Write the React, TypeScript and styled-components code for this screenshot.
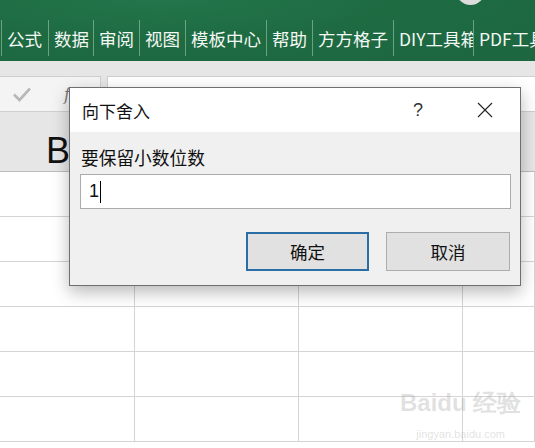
import React from "react";
import styled, { createGlobalStyle } from "styled-components";

const Global = createGlobalStyle`
  html, body { margin: 0; padding: 0; }
  body { font-family: "Noto Sans CJK SC", "Noto Sans", sans-serif; background: #fff; }
`;

const Page = styled.div`
  position: relative;
  width: 535px;
  height: 448px;
  overflow: hidden;
  background: #e6e6e6;
  display: flex;
  flex-direction: column;
`;

const Ribbon = styled.div`
  position: relative;
  height: 61px;
  flex: none;
  background: radial-gradient(ellipse at 30% 0%, #23754a 0%, #1e6b42 45%, #1c6640 100%);
  display: flex;
  align-items: flex-end;
  padding-bottom: 5px;
  box-sizing: border-box;
`;

const Avatar = styled.div`
  position: absolute;
  left: 456px;
  top: -24px;
  width: 29px;
  height: 29px;
  border-radius: 50%;
  background: #dcdcdc;
`;

const Tabs = styled.div`
  display: flex;
  height: 36px;
  margin-left: 1px;
`;

const Tab = styled.div<{ $w?: number }>`
  flex: none;
  ${(p) => (p.$w ? `width: ${p.$w}px;` : "")}
  box-sizing: border-box;
  padding: 0 0 0 5px;
  border-left: 1px solid rgba(200, 230, 210, 0.45);
  display: flex;
  align-items: center;
  color: #f4f8f5;
  font-size: 17.5px;
  white-space: nowrap;
  overflow: hidden;
`;

const FormulaRow = styled.div`
  display: flex;
  gap: 6px;
  margin-top: 15px;
  height: 36px;
  flex: none;
`;

const NameArea = styled.div`
  width: 101px;
  box-sizing: border-box;
  background: #f4f4f4;
  border: 1px solid #cfcfcf;
  border-left: none;
  display: flex;
  align-items: center;
  padding-left: 12px;
  gap: 32px;
`;

const Fx = styled.span`
  font-family: "DejaVu Serif", serif;
  font-style: italic;
  color: #777;
  font-size: 16px;
`;

const FormulaInput = styled.div`
  flex: 1;
  background: #fff;
  border: 1px solid #cfcfcf;
  border-right: none;
`;

const HeaderRow = styled.div`
  height: 60px;
  flex: none;
  box-sizing: border-box;
  background: #e6e6e6;
  border-bottom: 1px solid #bdbdbd;
  display: flex;
  align-items: flex-end;
  padding-left: 46px;
`;

const ColLetter = styled.span`
  font-family: "Liberation Sans", Arial, sans-serif;
  font-size: 36px;
  line-height: 40px;
  color: #111;
`;

const Grid = styled.div`
  flex: 1;
  display: grid;
  grid-template-columns: 135px 164px 164px 1fr;
  grid-auto-rows: 45px;
  background: #fff;
`;

const Cell = styled.div`
  border-right: 1px solid #d4d4d4;
  border-bottom: 1px solid #d4d4d4;
  box-sizing: border-box;
`;

const Dialog = styled.div`
  position: absolute;
  left: 69px;
  top: 87px;
  width: 452px;
  height: 199px;
  box-sizing: border-box;
  border: 1px solid #6f6f6f;
  background: #f0f0f0;
  box-shadow: 0 6px 16px rgba(0, 0, 0, 0.28);
  display: flex;
  flex-direction: column;
`;

const TitleBar = styled.div`
  height: 44px;
  flex: none;
  background: #fff;
  display: flex;
  align-items: center;
  padding-left: 12px;
  font-size: 17px;
  color: #111;
`;

const Title = styled.span`
  flex: 1;
`;

const Help = styled.span`
  font-family: "Liberation Sans", Arial, sans-serif;
  font-size: 18px;
  color: #333;
  width: 20px;
  margin-right: 44px;
`;

const CloseBtn = styled.span`
  display: flex;
  width: 16px;
  height: 16px;
  margin-right: 27px;
`;

const Body = styled.div`
  flex: 1;
  display: flex;
  flex-direction: column;
  padding: 13px 9px 0 10px;
`;

const Label = styled.div`
  font-size: 17.7px;
  color: #111;
  line-height: 24px;
  padding-left: 1px;
`;

const TextBox = styled.div`
  margin-top: 5px;
  height: 35px;
  box-sizing: border-box;
  background: #fff;
  border: 1px solid #ababab;
  display: flex;
  align-items: center;
  padding-left: 8px;
  font-family: "Liberation Sans", Arial, sans-serif;
  font-size: 18px;
  color: #111;
`;

const Caret = styled.span`
  display: inline-block;
  width: 1px;
  height: 22px;
  background: #000;
  margin-left: 1px;
`;

const Buttons = styled.div`
  display: flex;
  justify-content: flex-end;
  gap: 17px;
  margin-top: 23px;
  padding-right: 1px;
`;

const Button = styled.div<{ $primary?: boolean }>`
  width: ${(p) => (p.$primary ? 123 : 124)}px;
  height: 39px;
  box-sizing: border-box;
  background: #e1e1e1;
  border: ${(p) => (p.$primary ? "2px solid #2b6ea6" : "1px solid #adadad")};
  display: flex;
  align-items: center;
  justify-content: center;
  font-size: 17.5px;
  color: #111;
`;

const Watermark = styled.div`
  position: absolute;
  left: 400px;
  top: 388px;
  display: flex;
  flex-direction: column;
  align-items: center;
  color: rgba(170, 170, 170, 0.35);
  font-family: "Liberation Sans", Arial, sans-serif;
  white-space: nowrap;
  pointer-events: none;
`;

const WmTop = styled.span`
  font-size: 24px;
  font-weight: bold;
  line-height: 30px;
`;

const WmBottom = styled.span`
  font-size: 11px;
  line-height: 16px;
  margin-top: 8px;
`;

const tabs: { t: string; w?: number }[] = [
  { t: "公式", w: 47 },
  { t: "数据", w: 45 },
  { t: "审阅", w: 46 },
  { t: "视图", w: 46 },
  { t: "模板中心", w: 81 },
  { t: "帮助", w: 46 },
  { t: "方方格子", w: 81 },
  { t: "DIY工具箱", w: 80 },
  { t: "PDF工具集", w: 70 },
];

export default function App() {
  const cells = Array.from({ length: 24 });
  return (
    <>
      <Global />
      <Page>
        <Ribbon>
          <Avatar />
          <Tabs>
            {tabs.map((x) => (
              <Tab key={x.t} $w={x.w}>
                {x.t}
              </Tab>
            ))}
          </Tabs>
        </Ribbon>
        <FormulaRow>
          <NameArea>
            <svg width="20" height="16" viewBox="0 0 20 16">
              <path d="M2 8.5 L7.5 14 L18 2.5" fill="none" stroke="#b8b8b8" strokeWidth="2.6" />
            </svg>
            <Fx>f</Fx>
          </NameArea>
          <FormulaInput />
        </FormulaRow>
        <HeaderRow>
          <ColLetter>B</ColLetter>
        </HeaderRow>
        <Grid>
          {cells.map((_, i) => (
            <Cell key={i} />
          ))}
        </Grid>
        <Watermark>
          <WmTop>Baidu 经验</WmTop>
          <WmBottom>jingyan.baidu.com</WmBottom>
        </Watermark>
        <Dialog>
          <TitleBar>
            <Title>向下舍入</Title>
            <Help>?</Help>
            <CloseBtn>
              <svg width="16" height="16" viewBox="0 0 16 16">
                <path d="M1 1 L15 15 M15 1 L1 15" stroke="#222" strokeWidth="1.1" />
              </svg>
            </CloseBtn>
          </TitleBar>
          <Body>
            <Label>要保留小数位数</Label>
            <TextBox>
              1<Caret />
            </TextBox>
            <Buttons>
              <Button $primary>确定</Button>
              <Button>取消</Button>
            </Buttons>
          </Body>
        </Dialog>
      </Page>
    </>
  );
}
